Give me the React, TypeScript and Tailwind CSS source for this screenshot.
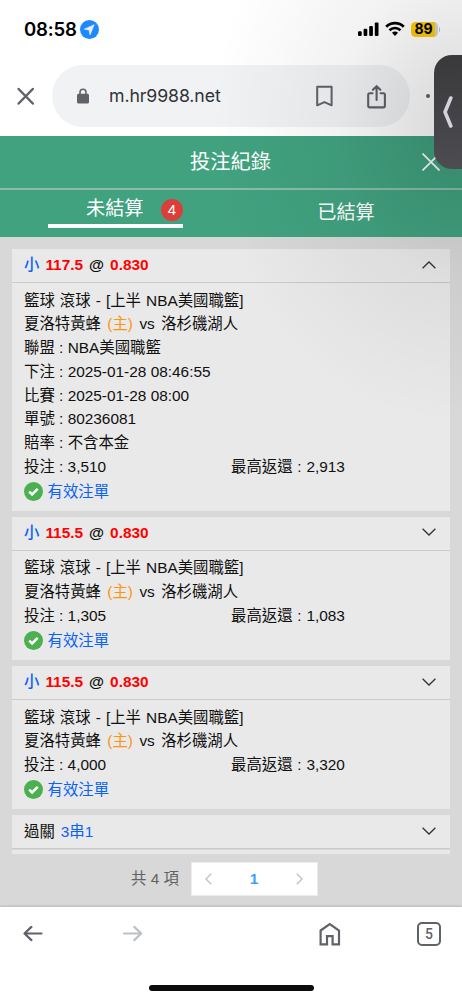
import React from "react";

interface Bet {
  line?: string;
  odds?: string;
  parlay?: string;
  details?: string[][];
  stake?: string;
  payout?: string;
  open?: boolean;
}

const bets: Bet[] = [
  {
    line: "117.5",
    odds: "0.830",
    open: true,
    details: [
      ["聯盟", "NBA美國職籃"],
      ["下注", "2025-01-28 08:46:55"],
      ["比賽", "2025-01-28 08:00"],
      ["單號", "80236081"],
      ["賠率", "不含本金"],
    ],
    stake: "3,510",
    payout: "2,913",
  },
  { line: "115.5", odds: "0.830", stake: "1,305", payout: "1,083" },
  { line: "115.5", odds: "0.830", stake: "4,000", payout: "3,320" },
  { parlay: "3串1" },
];

const StatusBar: React.FC = () => (
  <div className="flex h-[65px] items-start justify-between pt-[19px] pr-[22px] pl-6 text-black">
    <div className="flex items-center gap-[3px] font-['Inter',sans-serif]">
      <span className="w-[53px] text-[18.6px] leading-[21px] font-semibold tracking-[-0.2px] whitespace-nowrap">
        08:58
      </span>
      <svg width="19" height="19" viewBox="0 0 19 19">
        <circle cx="9.5" cy="9.5" r="9.5" fill="#1e88ff" />
        <path d="M14.2 4.7 4.2 9.2l4.9.8.9 4.9z" fill="#e9eef5" stroke="#e9eef5" strokeWidth=".6" strokeLinejoin="round" />
      </svg>
    </div>
    <div className="flex items-center pt-[2px]">
      <svg width="21" height="16" viewBox="0 0 21 16">
        <rect x="0" y="10.3" width="3.7" height="4.7" rx="1" />
        <rect x="5.6" y="7.8" width="3.7" height="7.2" rx="1" />
        <rect x="11.2" y="4.9" width="3.7" height="10.1" rx="1" />
        <rect x="16.8" y="1.6" width="3.7" height="13.4" rx="1" />
      </svg>
      <svg width="20" height="16" viewBox="0 0 20 16" className="ml-[6px]" fill="none" stroke="#000" strokeWidth="2.7">
        <path d="M1.2 5.7a12.6 12.6 0 0 1 17.6 0" />
        <path d="M4.5 9.2a8 8 0 0 1 11 0" />
        <path d="M10 14.9 7 11.8a4.2 4.2 0 0 1 6 0z" fill="#000" stroke="none" />
      </svg>
      <div className="ml-[6px] flex h-[15px] w-[27px] items-center justify-center overflow-hidden rounded-[4.5px] bg-[linear-gradient(90deg,#fccb0a_89%,#d4d4d6_89%)] pr-[1px] font-['Inter',sans-serif] text-[14px] leading-none font-bold">
        89
      </div>
      <div className="ml-[1px] h-[5px] w-[1.5px] rounded-r-full bg-[#c4c4c6]" />
    </div>
  </div>
);

const AddressBar: React.FC = () => (
  <div className="flex h-[71px] items-start">
    <svg width="52" height="62" viewBox="0 0 52 62" className="shrink-0" stroke="#5f6267" strokeWidth="2.5" strokeLinecap="round">
      <path d="m18.6 24 14.2 14.5M32.8 24 18.6 38.5" />
    </svg>
    <div className="flex h-[62px] w-[358px] shrink-0 items-center rounded-full bg-[#f0f2f4] pl-[25px]">
      <svg width="12" height="16" viewBox="0 0 12 16">
        <path d="M3 7V4.2a3 3 0 0 1 6 0V7" fill="none" stroke="#5f6267" strokeWidth="1.6" />
        <rect x="0" y="5.7" width="12" height="9.7" rx="1.5" fill="#5f6267" />
      </svg>
      <span className="ml-5 w-[207px] font-['Inter',sans-serif] text-[17.7px] leading-6 tracking-[-0.1px] text-[#303236]">
        m.hr9988.net
      </span>
      <svg width="17" height="22" viewBox="0 0 17 22" fill="none" stroke="#5f6267" strokeWidth="2" strokeLinejoin="round">
        <path d="M1.2 1.7h14.4v18.6l-7.2-3.2-7.2 3.2z" />
      </svg>
      <svg width="20" height="25" viewBox="0 0 20 25" className="ml-[34px]" fill="none" stroke="#5f6267" strokeWidth="2.1" strokeLinecap="round">
        <path d="M5.5 9.2H2.8c-1 0-1.6.6-1.6 1.6v11c0 1 .6 1.6 1.6 1.6h13.5c1 0 1.6-.6 1.6-1.6v-11c0-1-.6-1.6-1.6-1.6h-2.7M9.6 15.9V2.4M5.9 5.8 9.6 2.2 13.3 5.8" />
      </svg>
    </div>
    <div className="mt-[29px] ml-[16px] size-1 rounded-full bg-[#5f6267]" />
  </div>
);

const ValidTicket: React.FC = () => (
  <div className="mt-[1px] flex h-[24px] items-center text-[#0b62f5]">
    <svg width="19" height="19" viewBox="0 0 19 19">
      <circle cx="9.5" cy="9.5" r="9.5" fill="#4caf50" />
      <path d="m5.2 9.6 2.9 2.8 5.6-5.6" fill="none" stroke="#fff" strokeWidth="2.6" />
    </svg>
    <span className="ml-[4.5px]">有效注單</span>
  </div>
);

const BetCard: React.FC<{ bet: Bet }> = ({ bet }) => (
  <div className="mb-[5.7px] bg-[#e9e9e9]">
    <div className="flex h-[34px] items-center justify-between border-b border-[#cbcbcb] pr-[14px] pl-3">
      {bet.parlay ? (
        <div>
          過關<span className="ml-[6px] text-[#0b62f5]">{bet.parlay}</span>
        </div>
      ) : (
        <div className="-mt-px flex gap-[6px]">
          <span className="font-medium text-[#0b62f5]">小</span>
          <b className="text-[#f00]">{bet.line}</b>
          <b>@</b>
          <b className="text-[#f00]">{bet.odds}</b>
        </div>
      )}
      <svg width="14" height="8" viewBox="0 0 14 8" fill="none" stroke="#333" strokeWidth="1.3" className="mb-[2px]">
        <path d={bet.open ? "M.6 7.2 7 1l6.4 6.2" : "M.6.8 7 7 13.4.8"} />
      </svg>
    </div>
    {bet.stake && (
      <div className="px-3 pt-[5.5px] pb-[7.7px] leading-[23.75px]">
        <div className="[word-spacing:0.8px]">籃球 滾球 - [上半 NBA美國職籃]</div>
        <div className="[word-spacing:2.1px]">
          夏洛特黃蜂 <span className="text-[#ff9412]">(主)</span> vs 洛杉磯湖人
        </div>
        {bet.details?.map(([label, value]) => (
          <div key={label}>
            {label} : {value}
          </div>
        ))}
        <div className="grid grid-cols-2">
          <div>投注 : {bet.stake}</div>
          <div className="[word-spacing:0.5px]">最高返還 : {bet.payout}</div>
        </div>
        <ValidTicket />
      </div>
    )}
  </div>
);

const Pagination: React.FC = () => (
  <div className="mt-2 flex h-[34px] items-center pl-[131px] text-[#616266]">
    <span className="w-[60px]">共 4 項</span>
    <div className="flex h-[34px] w-[127px] items-center justify-between border border-[#ececec] bg-white pr-[14px] pl-[13px]">
      <svg width="7" height="12" viewBox="0 0 7 12" fill="none" stroke="#c0c4cc" strokeWidth="1.5">
        <path d="M6.2.8 1 6l5.2 5.2" />
      </svg>
      <b className="text-[#409eff]">1</b>
      <svg width="7" height="12" viewBox="0 0 7 12" fill="none" stroke="#c0c4cc" strokeWidth="1.5">
        <path d="M.8.8 6 6 .8 11.2" />
      </svg>
    </div>
  </div>
);

const BottomBar: React.FC = () => (
  <div className="flex h-[93px] flex-col items-center justify-between bg-white pb-[9px] shadow-[0_-1px_2px_rgba(0,0,0,0.15)]">
    <div className="flex h-[54px] w-full items-center pl-[23px]">
      <svg width="20" height="16" viewBox="0 0 20 16" fill="none" stroke="#5f6267" strokeWidth="2.2" strokeLinecap="round" strokeLinejoin="round">
        <path d="M18.5 7.5H1.5M8.4.9 1.5 7.5l6.9 6.6" />
      </svg>
      <svg width="20" height="16" viewBox="0 0 20 16" className="ml-[80px]" fill="none" stroke="#bdc0c5" strokeWidth="2.2" strokeLinecap="round" strokeLinejoin="round">
        <path d="M1 7.5h17.2M11.3.9l6.9 6.6-6.9 6.6" />
      </svg>
      <svg width="22" height="25" viewBox="0 0 22 25" className="ml-[176px]" fill="none" stroke="#5f6267" strokeWidth="2.2">
        <path d="M1.6 8.5 10.8 2 20 8.5v13.8h-6.4v-8.2H8v8.2H1.6z" />
      </svg>
      <div className="ml-[76px] flex size-6 items-center justify-center rounded-[5px] border-2 border-[#5f6267] font-['Roboto',sans-serif] text-[14px] leading-none font-medium text-[#5f6267]">
        5
      </div>
    </div>
    <div className="h-[6px] w-[165px] rounded-full bg-[#0c0c0c]" />
  </div>
);

const App: React.FC = () => (
  <div className="relative flex h-[1000px] w-[462px] flex-col overflow-hidden bg-white font-['Liberation_Sans','Noto_Sans_CJK_TC',sans-serif] text-[15.4px] text-[#101010]">
    <StatusBar />
    <AddressBar />

    <div className="bg-[#41a280] text-white">
      <div className="flex h-[54px] items-center justify-between border-b-2 border-[#8cbca9] pr-[22px] pl-[190px]">
        <h1 className="text-[20.3px]">投注紀錄</h1>
        <svg width="18" height="18" viewBox="0 0 18 18" stroke="#fff" strokeWidth="1.7">
          <path d="m.5.5 17 17M17.5.5.5 17.5" />
        </svg>
      </div>
      <div className="grid h-[47px] grid-cols-2 text-[19.2px]">
        <div className="ml-12 flex h-[38px] w-[135px] items-center border-b-4 border-white pt-[5px] pl-[38px]">
          <span className="-mt-[1px] whitespace-nowrap">未結算</span>
          <span className="ml-auto flex size-[22px] shrink-0 items-center justify-center rounded-full bg-[#dc3f3b] text-[15px] leading-none">
            4
          </span>
        </div>
        <div className="flex items-center justify-center pr-px">已結算</div>
      </div>
    </div>

    <div className="h-[670px] bg-[#d8d8d8]">
      <div className="h-[617px] overflow-hidden px-3 pt-3">
        {bets.map((bet, i) => (
          <React.Fragment key={i}>
            <BetCard bet={bet} />
            {bet.parlay && <div className="-mt-[4.5px] h-5 bg-[#e9e9e9]" />}
          </React.Fragment>
        ))}
      </div>
      <Pagination />
    </div>

    <BottomBar />

    {/* floating drawer handle and the shade it casts */}
    <div className="pointer-events-none absolute top-0 right-0 h-[420px] w-[260px] bg-[radial-gradient(ellipse_250px_300px_at_100%_125px,rgba(0,0,0,0.16),rgba(0,0,0,0.05)_50%,transparent)]" />
    <div className="absolute top-[55px] -right-5 flex h-[114px] w-12 items-center rounded-[18px] bg-linear-to-b from-[#39383a] to-[#4d4c51] pl-[9px]">
      <svg width="10" height="34" viewBox="0 0 10 34" fill="none" stroke="#d5d1dc" strokeWidth="3.6" strokeLinecap="round" strokeLinejoin="round">
        <path d="M7.8 3 2 17l5.8 14" />
      </svg>
    </div>
  </div>
);

export default App;
